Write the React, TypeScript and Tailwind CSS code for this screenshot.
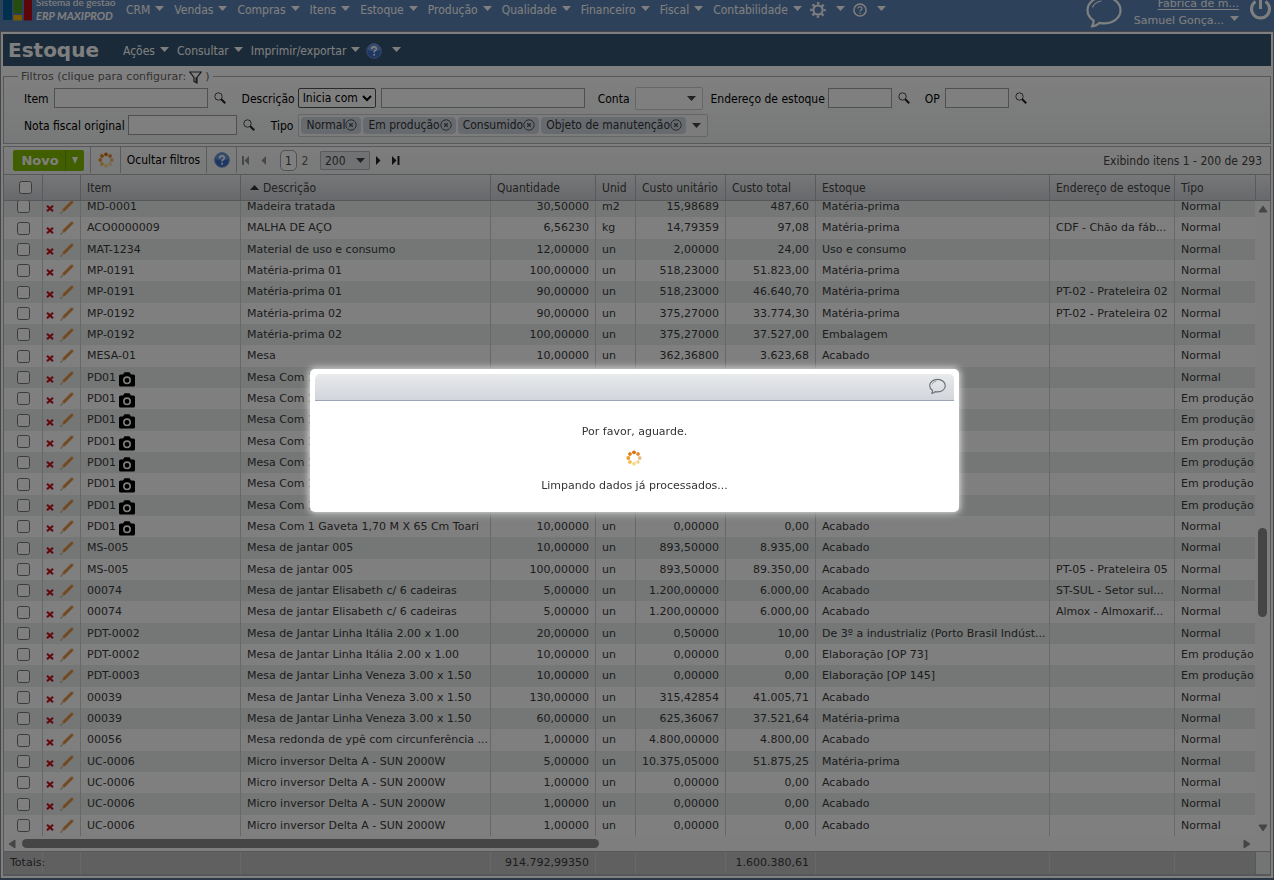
import type { ReactNode } from 'react';

type Row = {
  item: string;
  desc: string;
  qtd: string;
  un: string;
  unit: string;
  total: string;
  estoque: string;
  end?: string;
  tipo?: string;
  foto?: boolean;
};

const gaveta = 'Mesa Com 1 Gaveta 1,70 M X 65 Cm Toari';
const gavetaRow = { item: 'PD01', desc: gaveta, qtd: '10,00000', un: 'un', unit: '0,00000', total: '0,00', estoque: 'Acabado', foto: true };

const rows: Row[] = [
  { item: 'MD-0001', desc: 'Madeira tratada', qtd: '30,50000', un: 'm2', unit: '15,98689', total: '487,60', estoque: 'Matéria-prima' },
  { item: 'ACO0000009', desc: 'MALHA DE AÇO', qtd: '6,56230', un: 'kg', unit: '14,79359', total: '97,08', estoque: 'Matéria-prima', end: 'CDF - Chão da fáb...' },
  { item: 'MAT-1234', desc: 'Material de uso e consumo', qtd: '12,00000', un: 'un', unit: '2,00000', total: '24,00', estoque: 'Uso e consumo' },
  { item: 'MP-0191', desc: 'Matéria-prima 01', qtd: '100,00000', un: 'un', unit: '518,23000', total: '51.823,00', estoque: 'Matéria-prima' },
  { item: 'MP-0191', desc: 'Matéria-prima 01', qtd: '90,00000', un: 'un', unit: '518,23000', total: '46.640,70', estoque: 'Matéria-prima', end: 'PT-02 - Prateleira 02' },
  { item: 'MP-0192', desc: 'Matéria-prima 02', qtd: '90,00000', un: 'un', unit: '375,27000', total: '33.774,30', estoque: 'Matéria-prima', end: 'PT-02 - Prateleira 02' },
  { item: 'MP-0192', desc: 'Matéria-prima 02', qtd: '100,00000', un: 'un', unit: '375,27000', total: '37.527,00', estoque: 'Embalagem' },
  { item: 'MESA-01', desc: 'Mesa', qtd: '10,00000', un: 'un', unit: '362,36800', total: '3.623,68', estoque: 'Acabado' },
  gavetaRow,
  { ...gavetaRow, tipo: 'Em produção' },
  { ...gavetaRow, tipo: 'Em produção' },
  { ...gavetaRow, tipo: 'Em produção' },
  { ...gavetaRow, tipo: 'Em produção' },
  { ...gavetaRow, tipo: 'Em produção' },
  { ...gavetaRow, tipo: 'Em produção' },
  gavetaRow,
  { item: 'MS-005', desc: 'Mesa de jantar 005', qtd: '10,00000', un: 'un', unit: '893,50000', total: '8.935,00', estoque: 'Acabado' },
  { item: 'MS-005', desc: 'Mesa de jantar 005', qtd: '100,00000', un: 'un', unit: '893,50000', total: '89.350,00', estoque: 'Acabado', end: 'PT-05 - Prateleira 05' },
  { item: '00074', desc: 'Mesa de jantar Elisabeth c/ 6 cadeiras', qtd: '5,00000', un: 'un', unit: '1.200,00000', total: '6.000,00', estoque: 'Acabado', end: 'ST-SUL - Setor sul...' },
  { item: '00074', desc: 'Mesa de jantar Elisabeth c/ 6 cadeiras', qtd: '5,00000', un: 'un', unit: '1.200,00000', total: '6.000,00', estoque: 'Acabado', end: 'Almox - Almoxarif...' },
  { item: 'PDT-0002', desc: 'Mesa de Jantar Linha Itália 2.00 x 1.00', qtd: '20,00000', un: 'un', unit: '0,50000', total: '10,00', estoque: 'De 3º a industrializ (Porto Brasil Indúst...' },
  { item: 'PDT-0002', desc: 'Mesa de Jantar Linha Itália 2.00 x 1.00', qtd: '10,00000', un: 'un', unit: '0,00000', total: '0,00', estoque: 'Elaboração [OP 73]', tipo: 'Em produção' },
  { item: 'PDT-0003', desc: 'Mesa de Jantar Linha Veneza 3.00 x 1.50', qtd: '10,00000', un: 'un', unit: '0,00000', total: '0,00', estoque: 'Elaboração [OP 145]', tipo: 'Em produção' },
  { item: '00039', desc: 'Mesa de Jantar Linha Veneza 3.00 x 1.50', qtd: '130,00000', un: 'un', unit: '315,42854', total: '41.005,71', estoque: 'Acabado' },
  { item: '00039', desc: 'Mesa de Jantar Linha Veneza 3.00 x 1.50', qtd: '60,00000', un: 'un', unit: '625,36067', total: '37.521,64', estoque: 'Matéria-prima' },
  { item: '00056', desc: 'Mesa redonda de ypê com circunferência ...', qtd: '1,00000', un: 'un', unit: '4.800,00000', total: '4.800,00', estoque: 'Acabado' },
  { item: 'UC-0006', desc: 'Micro inversor Delta A - SUN 2000W', qtd: '5,00000', un: 'un', unit: '10.375,05000', total: '51.875,25', estoque: 'Matéria-prima' },
  { item: 'UC-0006', desc: 'Micro inversor Delta A - SUN 2000W', qtd: '1,00000', un: 'un', unit: '0,00000', total: '0,00', estoque: 'Acabado' },
  { item: 'UC-0006', desc: 'Micro inversor Delta A - SUN 2000W', qtd: '1,00000', un: 'un', unit: '0,00000', total: '0,00', estoque: 'Acabado' },
  { item: 'UC-0006', desc: 'Micro inversor Delta A - SUN 2000W', qtd: '1,00000', un: 'un', unit: '0,00000', total: '0,00', estoque: 'Acabado' },
];

const menu = ['CRM', 'Vendas', 'Compras', 'Itens', 'Estoque', 'Produção', 'Qualidade', 'Financeiro', 'Fiscal', 'Contabilidade'];
const tipos = ['Normal', 'Em produção', 'Consumido', 'Objeto de manutenção'];

const cell = 'border-r border-[#cdd1d4] px-1.5 whitespace-nowrap overflow-hidden';
const headCell = 'border-r border-[#b0b5bd] pl-1.5 text-left font-normal whitespace-nowrap overflow-hidden';
const footCell = 'border-r border-[#d0d0d0] px-1.5 text-right font-normal';

function Caret({ className = '' }: { className?: string }) {
  return (
    <svg width="9" height="5" viewBox="0 0 9 5" className={`shrink-0 ${className}`} fill="currentColor">
      <path d="M0 0h9L4.500 5z" />
    </svg>
  );
}

function MenuButton({ children }: { children: string }) {
  return (
    <button className="flex items-center gap-[5px] whitespace-nowrap">
      {children}
      <Caret className="mb-1" />
    </button>
  );
}

function Spinner() {
  const dots = ['#d96f0c', '#e08a34', '#edbb85', '#f3d79e', '#f7dc84', '#f4bd4f', '#ef9a2a', '#e37f14'];
  return (
    <svg width="16" height="16" viewBox="0 0 16 16" className="shrink-0">
      {dots.map((fill, i) => (
        <ellipse key={i} cx="8" cy="2.300" rx="1.900" ry="1.900" fill={fill} transform={`rotate(${i * 45} 8 8)`} />
      ))}
    </svg>
  );
}

function HelpBall() {
  return (
    <svg width="16" height="16" viewBox="0 0 16 16" className="shrink-0">
      <circle cx="8" cy="8" r="7.300" fill="#3a6fc4" stroke="#6f93cf" strokeWidth="1" />
      <path d="M1.600 7a6.400 6.400 0 0 1 12.800 0q-6.400 2.500-12.800 0z" fill="#6b98dd" />
      <path d="M5.700 6.200c0-3.200 4.800-3 4.600-.2-.1 1.500-2.200 1.500-2.200 3.400" fill="none" stroke="#fff" strokeWidth="1.600" />
      <circle cx="8.100" cy="11.700" r="1" fill="#fff" />
    </svg>
  );
}

function SearchButton({ label }: { label: string }) {
  return (
    <button aria-label={label} className="mx-1.5 shrink-0">
      <svg width="12" height="12" viewBox="0 0 12 12" fill="none">
        <circle cx="4.500" cy="4.500" r="3.700" stroke="#4a4a4a" />
        <path d="M7.200 7.200l4 4" stroke="#222" strokeWidth="2" />
      </svg>
    </button>
  );
}

function Bubble({ size, stroke, color }: { size: number; stroke: number; color: string }) {
  return (
    <svg width={size} height={size} viewBox="0 0 36 36" fill="none" stroke={color} strokeWidth={stroke} strokeLinejoin="round">
      <path d="M18 3C8.500 3 1.500 9 1.500 16.300c0 4.300 2.300 7.800 6 10.200.3 2-.3 4-1.700 6 3.500-.4 6-1.800 7.500-3.600 1.500.4 3 .5 4.700.5 9.500 0 16.500-5.800 16.500-13.100S27.500 3 18 3z" />
      <path d="M6.500 13.500C8 9.500 11.500 7.500 15.500 7" strokeWidth={stroke / 2} />
    </svg>
  );
}

type FieldProps = { id: string; label: string; width: string; gap?: string };

function Field({ id, label, width, gap = 'mr-[5px]' }: FieldProps) {
  return (
    <div className="flex items-center">
      <label htmlFor={id} className={`pt-px whitespace-nowrap ${gap}`}>{label}</label>
      <input id={id} type="text" className={`h-5 border border-[#a0a0a0] bg-white ${width}`} />
      <SearchButton label={`Pesquisar ${label}`} />
    </div>
  );
}

function Columns() {
  return (
    <colgroup>
      <col className="w-[39px]" />
      <col className="w-[38px]" />
      <col className="w-[160px]" />
      <col className="w-[250px]" />
      <col className="w-[105px]" />
      <col className="w-[40px]" />
      <col className="w-[90px]" />
      <col className="w-[90px]" />
      <col />
      <col className="w-[125px]" />
      <col className="w-[80px]" />
    </colgroup>
  );
}

function TopBar() {
  return (
    <header className="flex h-[31px] shrink-0 items-start overflow-hidden bg-[#5d83b5] text-white">
      <a href="#inicio" className="flex h-[22px] w-[120px] shrink-0 gap-[3px] pl-[3px]">
        <svg width="30" height="21" viewBox="0 0 30 21" className="shrink-0">
          <path d="M0 0h9v20H0z" fill="#00609c" />
          <path d="M10.500 0h8.500v13h-8.500z" fill="#4e9a1c" />
          <path d="M10.500 15h8.500v5.500h-8.500z" fill="#f0b000" />
          <path d="M21 0h8v20.500h-8z" fill="#b80a14" />
        </svg>
        <span className="-mt-1 flex flex-col font-['Lato',sans-serif] text-[10px] leading-[13px] font-medium whitespace-nowrap">
          <span>Sistema de gestão</span>
          <span className="text-[11px] font-bold italic">ERP MAXIPROD</span>
        </span>
      </a>
      <nav className="flex h-5 items-center gap-[10px] pl-1.5">
        {menu.map((m) => (
          <MenuButton key={m}>{m}</MenuButton>
        ))}
        <button aria-label="Configurações" className="-ml-0.5 flex items-center gap-[10px]">
          <svg width="16" height="16" viewBox="0 0 16 16" fill="none" stroke="currentColor" className="shrink-0">
            <circle cx="8" cy="8" r="4.600" strokeWidth="2" />
            <circle cx="8" cy="8" r="6.700" strokeWidth="2.200" strokeDasharray="2.400 2.862" strokeDashoffset="1.200" />
          </svg>
          <Caret className="mb-1" />
        </button>
        <button aria-label="Ajuda" className="-ml-0.5 flex items-center gap-[10px]">
          <svg width="14" height="14" viewBox="0 0 14 14" fill="none" stroke="currentColor" className="shrink-0">
            <circle cx="7" cy="7" r="6.100" strokeWidth="1.500" />
            <path d="M5 5.600c0-2.600 4.100-2.400 4 0-.1 1.400-1.900 1.400-1.900 3" strokeWidth="1.200" />
            <path d="M7.100 9.700v1.300" strokeWidth="1.300" />
          </svg>
          <Caret className="mb-1" />
        </button>
      </nav>
      <div className="ml-auto flex items-start pr-0.5 font-['DejaVu_Sans',sans-serif] text-[11px]">
        <button aria-label="Mensagens" className="-mt-1.5 mr-3">
          <Bubble size={36} stroke={2.2} color="#fff" />
        </button>
        <div className="-mt-[5px] flex flex-col items-end leading-[17px]">
          <a href="#empresa" className="underline underline-offset-2">Fabrica de m...</a>
          <button className="flex items-center gap-1.5">
            Samuel Gonça...
            <Caret className="mb-1" />
          </button>
        </div>
        <button aria-label="Sair" className="-mt-1 ml-[10px]">
          <svg width="23" height="24" viewBox="0 0 23 24" fill="none" stroke="currentColor" strokeWidth="3">
            <path d="M6.500 5.500a9 9 0 1 0 10 0" />
            <path d="M11.500 2v11" />
          </svg>
        </button>
      </div>
    </header>
  );
}

function TitleBar() {
  return (
    <div className="flex h-8 shrink-0 items-center bg-[#365470] text-white">
      <h1 className="mr-6 pl-[5px] font-['DejaVu_Sans',sans-serif] text-[20px] font-bold">Estoque</h1>
      <div className="flex items-center gap-2 pt-0.5">
        <MenuButton>Ações</MenuButton>
        <MenuButton>Consultar</MenuButton>
        <MenuButton>Imprimir/exportar</MenuButton>
        <button aria-label="Ajuda do estoque" className="-ml-0.5 flex items-center gap-[10px]">
          <HelpBall />
          <Caret className="mb-1" />
        </button>
      </div>
    </div>
  );
}

function Filters() {
  return (
    <fieldset className="min-w-0 shrink-0 border border-[#acb0b8] bg-linear-to-b from-white to-[#eff2f1] pb-[6px] text-black">
      <legend className="ml-[14px] px-[3px] leading-5 text-[#666]">
        <button className="flex h-5 items-center pt-0.5 font-['DejaVu_Sans',sans-serif] text-[11px]">
          Filtros (clique para configurar:
          <svg width="13" height="13" viewBox="0 0 13 13" className="mx-[3px]">
            <path d="M.8 1h11.400L8 6.500v5.500L5 10.500v-4z" fill="none" stroke="#333" strokeWidth="1.200" />
            <path d="M6.500 6.500v5l1.500.5V6.500z" fill="#333" />
          </svg>
          )
        </button>
      </legend>
      <div className="flex h-6 items-center pl-5">
        <Field id="item" label="Item" width="w-[154px]" />
        <div className="ml-[10px] flex items-center">
          <label htmlFor="descricao" className="mr-[3px] pt-px">Descrição</label>
          <select aria-label="Operador da descrição" className="h-5 w-[78px] rounded-[2px] border border-[#555] bg-white">
            <option>Inicia com</option>
          </select>
          <input id="descricao" type="text" className="ml-[5px] h-5 w-[204px] border border-[#a0a0a0] bg-white" />
        </div>
        <div className="ml-[13px] flex items-center">
          <label htmlFor="conta" className="mr-[5px] pt-px">Conta</label>
          <button id="conta" aria-label="Conta" className="flex h-[23px] w-[68px] items-center justify-end rounded-[2px] border border-[#c8ccd0] bg-white pr-1.5">
            <Caret className="text-[#444]" />
          </button>
        </div>
        <div className="ml-2 flex items-center">
          <Field id="endereco" label="Endereço de estoque" width="w-[64px]" gap="mr-[3px]" />
        </div>
        <div className="ml-[9px] flex items-center">
          <Field id="op" label="OP" width="w-[64px]" />
        </div>
      </div>
      <div className="mt-[3px] flex h-6 items-center pl-5">
        <Field id="nota" label="Nota fiscal original" width="w-[109px]" gap="mr-[3px]" />
        <span className="mr-[5px] ml-[10px] pt-px">Tipo</span>
        <div className="flex h-[23px] items-center gap-0.5 rounded-[2px] border border-[#c8ccd0] bg-[#f8f9f9] px-0.5 text-[#333]">
          {tipos.map((t) => (
            <span key={t} className="flex h-[17px] items-center rounded-[4px] bg-[#ced6e0] pr-1 pl-[5px] whitespace-nowrap">
              {t}
              <button aria-label={`Remover ${t}`}>
                <svg width="12" height="12" viewBox="0 0 12 12" fill="none" stroke="#555">
                  <circle cx="6" cy="6" r="5.200" />
                  <path d="M4.200 4.200l3.600 3.600M7.800 4.200L4.200 7.800" strokeWidth="1.300" />
                </svg>
              </button>
            </span>
          ))}
          <button aria-label="Abrir tipos" className="px-1">
            <Caret className="text-[#444]" />
          </button>
        </div>
      </div>
    </fieldset>
  );
}

function PagerIcon({ label, d, color }: { label: string; d: string; color: string }) {
  return (
    <button aria-label={label} className="shrink-0">
      <svg width="8" height="9" viewBox="0 0 8 9" fill={color}>
        <path d={d} />
      </svg>
    </button>
  );
}

function Toolbar() {
  return (
    <div className="flex h-[27px] shrink-0 items-center bg-linear-to-b from-[#fbfbfb] to-[#f2f3f3] pr-2 pl-[9px] text-[#444]">
      <div className="flex h-[21px] items-center rounded-[2px] bg-[#83bd00] text-white">
        <button className="flex h-full w-[52px] items-center justify-center pl-0.5 font-['DejaVu_Sans',sans-serif] text-[13px] font-bold">Novo</button>
        <button aria-label="Mais opções" className="flex h-full w-[19px] items-center justify-center border-l border-[#6b9e00]">
          <svg width="6" height="7" viewBox="0 0 6 7" fill="currentColor">
            <path d="M0 0h6L3 7z" />
          </svg>
        </button>
      </div>
      <div className="ml-1.5 flex h-[26px] items-center self-start">
        <span className="flex h-full w-[30px] items-center justify-center border-l border-[#b4b7bc]">
          <Spinner />
        </span>
        <button className="h-full w-[86px] border-l border-[#b4b7bc] whitespace-nowrap text-black">Ocultar filtros</button>
        <button aria-label="Ajuda" className="flex h-full w-[31px] items-center justify-center border-x border-[#b4b7bc]">
          <HelpBall />
        </button>
      </div>
      <div className="ml-[5px] flex items-center">
        <PagerIcon label="Primeira página" color="#8c8f94" d="M0 0h2v9H0zM7 0v9L2.500 4.500z" />
        <span className="w-[10px]" />
        <PagerIcon label="Página anterior" color="#8c8f94" d="M6 0v9L1.500 4.500z" />
        <button className="mr-1 ml-3 h-[21px] w-[17px] rounded-[5px] border border-[#a0a4ab] bg-white">1</button>
        <button className="w-2 text-[#666]">2</button>
        <button className="mr-1.5 ml-[11px] flex h-[19px] w-[50px] items-center justify-between rounded-[1px] border border-[#b0b4ba] bg-[#e2e4e7] pr-1 pl-1">
          200
          <Caret />
        </button>
        <PagerIcon label="Próxima página" color="#222" d="M0 0v9L4.500 4.500z" />
        <span className="w-2" />
        <PagerIcon label="Última página" color="#222" d="M0 0v9L4.500 4.500zM5.500 0h2v9h-2z" />
      </div>
      <span className="ml-auto whitespace-nowrap">Exibindo itens 1 - 200 de 293</span>
    </div>
  );
}

function Actions() {
  return (
    <div className="flex items-center gap-1.5">
      <button aria-label="Excluir" className="mt-1">
        <svg width="8" height="7" viewBox="0 0 8 7" stroke="#c8141e" strokeWidth="2.200">
          <path d="M1 .8l6 5.400M7 .8L1 6.200" />
        </svg>
      </button>
      <button aria-label="Editar">
        <svg width="14" height="14" viewBox="0 0 14 14">
          <path d="M2.300 9.300L11 .8q1.200-.7 2 .1.800.9.300 1.900L4.600 11.500z" fill="#ec9d4e" />
          <path d="M2.300 9.300l2.300 2.200L.6 13.400z" fill="#eacb9c" />
          <path d="M.9 12.400l.8.700-1.300.6z" fill="#222" />
          <path d="M3.500 10.500l8.400-8.300" stroke="#cf8434" />
        </svg>
      </button>
    </div>
  );
}

function Camera() {
  return (
    <svg width="16" height="15" viewBox="0 0 16 15" className="mt-[3px]">
      <path d="M1.500 2.500H4L5.500.3h5L12 2.500h2.500Q16 2.500 16 4v9q0 1.600-1.500 1.600h-13Q0 14.600 0 13V4q0-1.500 1.500-1.500z" fill="#000" />
      <circle cx="8" cy="8.300" r="3.200" fill="none" stroke="#fff" strokeWidth="1.600" />
    </svg>
  );
}

function Th({ children }: { children?: ReactNode }) {
  return <th className={headCell}>{children}</th>;
}

function Grid() {
  return (
    <div className="flex min-h-0 flex-1 flex-col border-t border-[#acb0b8] text-[#3a3a3a]">
      <div className="flex shrink-0 border-b border-[#acb0b8] bg-linear-to-b from-[#eff0f1] to-[#cfd2d7] text-[#444]">
        <div className="min-w-0 flex-1">
          <table className="w-full table-fixed border-separate border-spacing-0">
            <Columns />
            <thead>
              <tr className="h-[25px]">
                <th className="border-r border-[#b0b5bd] pl-1">
                  <input type="checkbox" aria-label="Selecionar todos" className="mx-auto block" />
                </th>
                <Th />
                <Th>Item</Th>
                <Th>
                  <span className="flex items-center gap-1 pl-[3px]">
                    <svg width="9" height="5" viewBox="0 0 9 5" fill="#333">
                      <path d="M0 5h9L4.500 0z" />
                    </svg>
                    Descrição
                  </span>
                </Th>
                <Th>Quantidade</Th>
                <Th>Unid</Th>
                <Th>Custo unitário</Th>
                <Th>Custo total</Th>
                <Th>Estoque</Th>
                <Th>Endereço de estoque</Th>
                <th className="px-1.5 text-left font-normal">Tipo</th>
              </tr>
            </thead>
          </table>
        </div>
        <div className="w-[15px] border-l border-[#b0b5bd]" />
      </div>

      <div className="flex min-h-0 flex-1">
        <div className="min-w-0 flex-1 overflow-hidden">
          <table className="-mt-[5px] w-full table-fixed border-separate border-spacing-0 font-['DejaVu_Sans',sans-serif] text-[11px]">
            <Columns />
            <tbody>
              {rows.map((r, i) => (
                <tr key={i} className="h-[21px] bg-white leading-4 odd:bg-[#e9eeec] nth-[3n+2]:h-[22px]">
                  <td className="border-r border-[#cdd1d4]">
                    <input type="checkbox" aria-label={`Selecionar ${r.item}`} className="mx-auto block" />
                  </td>
                  <td className="border-r border-[#cdd1d4] pl-[3px]">
                    <Actions />
                  </td>
                  <td className={cell}>
                    {r.foto ? (
                      <span className="flex h-4 items-center gap-[3px]">
                        {r.item}
                        <Camera />
                      </span>
                    ) : (
                      r.item
                    )}
                  </td>
                  <td className={cell}>{r.desc}</td>
                  <td className={`${cell} text-right`}>{r.qtd}</td>
                  <td className={cell}>{r.un}</td>
                  <td className={`${cell} text-right`}>{r.unit}</td>
                  <td className={`${cell} text-right`}>{r.total}</td>
                  <td className={cell}>{r.estoque}</td>
                  <td className={cell}>{r.end}</td>
                  <td className="pl-1.5 whitespace-nowrap">{r.tipo ?? 'Normal'}</td>
                </tr>
              ))}
            </tbody>
          </table>
        </div>
        <div className="flex w-[15px] shrink-0 flex-col items-center bg-[#fcfcfc] py-[3px]">
          <Arrow d="M1 8h8L5 2z" />
          <div className="flex-[314]" />
          <div className="h-[89px] w-[9px] rounded-full bg-[#8b8b8b]" />
          <div className="flex-[206]" />
          <Arrow d="M1 2h8L5 8z" />
        </div>
      </div>

      <div className="flex h-[15px] shrink-0 items-center bg-[#fcfcfc] pr-[18px] pl-[3px]">
        <Arrow d="M8 1v8L2 5z" />
        <div className="ml-[5px] h-[9px] flex-[577] rounded-full bg-[#8b8b8b]" />
        <div className="flex-[642]" />
        <Arrow d="M2 1v8l6-4z" />
      </div>

      <div className="flex shrink-0 border-t border-b-2 border-[#acb0b8] bg-[#c0c0c0]">
        <div className="min-w-0 flex-1">
          <table className="w-full table-fixed border-separate border-spacing-0 font-['DejaVu_Sans',sans-serif] text-[11px]">
            <Columns />
            <tfoot>
              <tr className="h-[22px]">
                <th className={`${footCell} whitespace-nowrap`}>
                  <span className="block w-0">Totais:</span>
                </th>
                <td className={footCell} />
                <td className={footCell} />
                <td className={footCell} />
                <td className={footCell}>914.792,99350</td>
                <td className={footCell} />
                <td className={footCell} />
                <td className={footCell}>1.600.380,61</td>
                <td className={footCell} />
                <td className={footCell} />
                <td />
              </tr>
            </tfoot>
          </table>
        </div>
        <div className="w-[15px] border-l border-[#acb0b8] bg-[#e6eae9]" />
      </div>
    </div>
  );
}

function Arrow({ d }: { d: string }) {
  return (
    <svg width="10" height="10" viewBox="0 0 10 10" fill="#8b8b8b" stroke="#8b8b8b" strokeLinejoin="round" className="shrink-0">
      <path d={d} />
    </svg>
  );
}

function WaitDialog() {
  return (
    <div className="fixed inset-0 flex items-center justify-center bg-black/50 pr-[5px]">
      <div role="dialog" aria-label="Aguarde" className="w-[649px] rounded-[5px] bg-white p-[5px] text-[#333] shadow-[0_0_7px_1px_rgba(255,255,255,0.8)]">
        <div className="flex h-[27px] items-center justify-end rounded-t-[5px] border-b border-[#9ca5b3] bg-linear-to-b from-[#e8eaeb] to-[#d2d5db] pr-2">
          <button aria-label="Mensagens">
            <Bubble size={17} stroke={2.4} color="#6b6e72" />
          </button>
        </div>
        <div className="flex h-[106px] flex-col items-center pt-[22px] font-['DejaVu_Sans',sans-serif] text-[11px] leading-[18px]">
          <p>Por favor, aguarde.</p>
          <div className="mt-[9px] mr-0.5 mb-[11px]">
            <Spinner />
          </div>
          <p>Limpando dados já processados...</p>
        </div>
      </div>
    </div>
  );
}

export default function App() {
  return (
    <div className="flex h-screen flex-col bg-[#54708c] font-['DejaVu_Sans_Condensed','DejaVu_Sans',sans-serif] text-[12px] leading-4">
      <TopBar />
      <main className="mb-0.5 flex min-h-0 flex-1 flex-col border border-b-0 border-[#8a8d92] bg-white p-0.5">
        <TitleBar />
        <Filters />
        <div className="mt-0.5 flex min-h-0 flex-1 flex-col border border-b-0 border-[#acb0b8]">
          <Toolbar />
          <Grid />
        </div>
      </main>
      <WaitDialog />
    </div>
  );
}
